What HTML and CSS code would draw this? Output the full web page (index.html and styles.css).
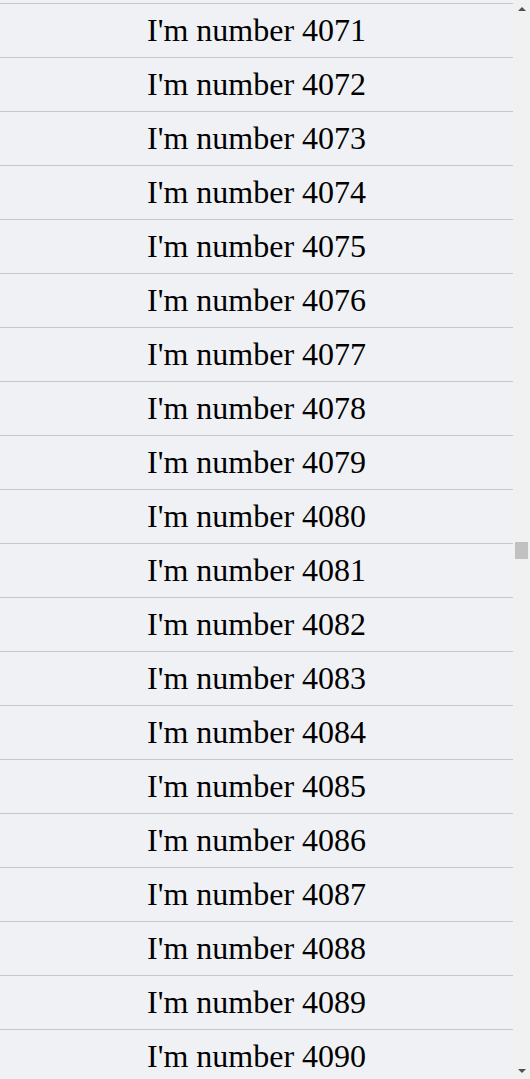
FILE: index.html
```html
<!DOCTYPE html>
<html>
<head>
<meta charset="utf-8">
<link rel="stylesheet" href="styles.css">
</head>
<body>
<div class="page">
  <div class="viewport">
    <ul class="list">
      <li class="row">I'm number 4071</li>
      <li class="row">I'm number 4072</li>
      <li class="row">I'm number 4073</li>
      <li class="row">I'm number 4074</li>
      <li class="row">I'm number 4075</li>
      <li class="row">I'm number 4076</li>
      <li class="row">I'm number 4077</li>
      <li class="row">I'm number 4078</li>
      <li class="row">I'm number 4079</li>
      <li class="row">I'm number 4080</li>
      <li class="row">I'm number 4081</li>
      <li class="row">I'm number 4082</li>
      <li class="row">I'm number 4083</li>
      <li class="row">I'm number 4084</li>
      <li class="row">I'm number 4085</li>
      <li class="row">I'm number 4086</li>
      <li class="row">I'm number 4087</li>
      <li class="row">I'm number 4088</li>
      <li class="row">I'm number 4089</li>
      <li class="row">I'm number 4090</li>
    </ul>
  </div>
  <div class="scrollbar">
    <div class="arrow arrow-up"></div>
    <div class="track"><div class="thumb"></div></div>
    <div class="arrow arrow-down"></div>
  </div>
</div>
</body>
</html>
```
FILE: styles.css
```css
html, body {
  margin: 0;
  padding: 0;
  height: 100%;
  overflow: hidden;
  background: #f0f1f5;
}
.page {
  display: flex;
  height: 1079px;
}
.viewport {
  flex: 1;
  overflow: hidden;
  background: #f0f1f5;
  padding-top: 3px;
}
.list {
  list-style: none;
  margin: 0;
  padding: 0;
  border-top: 1px solid #c7c7c9;
}
.row {
  height: 53px;
  border-bottom: 1px solid #c7c7c9;
  display: flex;
  align-items: center;
  justify-content: center;
  font-family: "Liberation Serif", "Times New Roman", serif;
  font-size: 32px;
  color: #000;
}
.scrollbar {
  width: 17px;
  background: #f1f1f1;
  display: flex;
  flex-direction: column;
}
.arrow {
  height: 17px;
  display: flex;
  align-items: center;
  justify-content: center;
}
.arrow-up::before {
  content: "";
  border-left: 4px solid transparent;
  border-right: 4px solid transparent;
  border-bottom: 4px solid #505050;
}
.arrow-down::before {
  content: "";
  border-left: 4px solid transparent;
  border-right: 4px solid transparent;
  border-top: 4px solid #505050;
}
.track {
  flex: 1;
  position: relative;
}
.thumb {
  position: absolute;
  left: 2px;
  right: 2px;
  top: 525px;
  height: 17px;
  background: #c1c1c1;
}
```
